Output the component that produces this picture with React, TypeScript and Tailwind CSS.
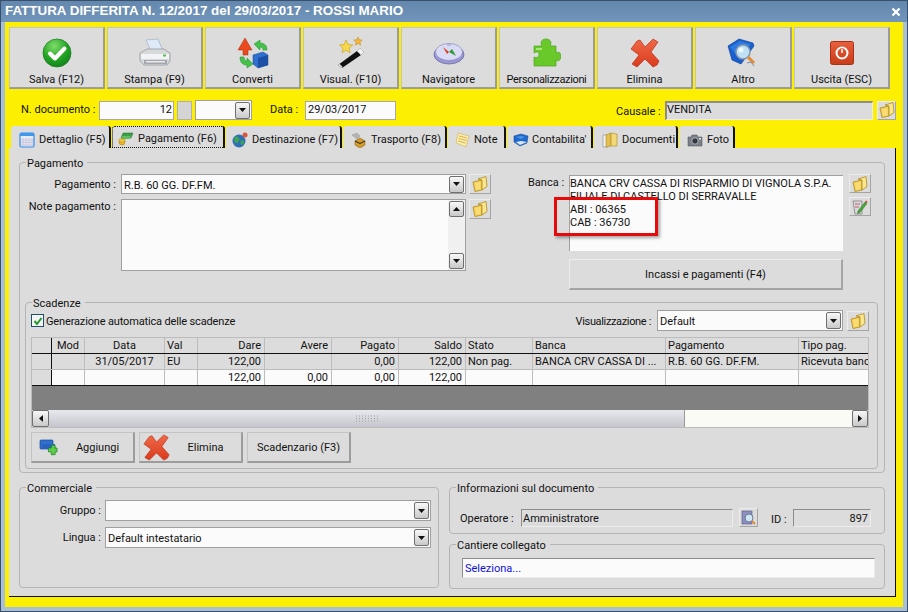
import React from "react";

const Check = () => (
  <svg width="30" height="30" viewBox="0 0 30 30">
    <defs>
      <radialGradient id="cg" cx="40%" cy="25%" r="85%"><stop offset="0" stopColor="#7fdc6a" /><stop offset="0.55" stopColor="#21a524" /><stop offset="1" stopColor="#0d7a1a" /></radialGradient>
    </defs>
    <circle cx="15" cy="15" r="14" fill="url(#cg)" stroke="#1a7a20" strokeWidth="0.7" />
    <path d="M8 15.5l5 5 9.5-10" fill="none" stroke="#fff" strokeWidth="4" strokeLinecap="round" strokeLinejoin="round" />
  </svg>
);
const Printer = () => (
  <svg width="32" height="32" viewBox="0 0 32 32">
    <path d="M7 3l12-1 5 12H12z" fill="#dfeaf8" stroke="#9fb0c4" strokeWidth="0.7" />
    <path d="M1 16l7-4h17l6 4v8l-3 4H5l-4-4z" fill="#d6d8da" stroke="#8b9095" strokeWidth="0.7" />
    <path d="M2 17h28v5H2z" fill="#f2f3f4" />
    <path d="M5 23h23v4H5z" fill="#a4a8ad" />
    <path d="M7 24h19v1.500H7z" fill="#e8e9ea" />
    <rect x="24" y="17.500" width="3" height="2" fill="#4fc04f" />
  </svg>
);
const Convert = () => (
  <svg width="32" height="32" viewBox="0 0 32 32">
    <path d="M16 18l10-3 5 3v10l-10 3-5-4z" fill="#2f6fd0" stroke="#17468f" strokeWidth="0.5" />
    <path d="M21 21l10-3v10l-10 3z" fill="#1c4fa6" />
    <path d="M8 1l7 12h-4v5H6v-5H1z" fill="#ea4a1e" stroke="#a93112" strokeWidth="0.5" />
    <path d="M17 7l6-4v3c4 0 7 2 7 7h-4c0-2-1-3-3-3v3z" fill="#45c24a" stroke="#1f8a2a" strokeWidth="0.5" />
    <path d="M16 27l-6 4v-3c-4 0-7-2-7-8h4c0 2 1 4 3 4v-3z" fill="#45c24a" stroke="#1f8a2a" strokeWidth="0.5" />
  </svg>
);
const Wand = () => (
  <svg width="32" height="32" viewBox="0 0 32 32">
    <path d="M3 28L22 14l4 4L7 31z" fill="#111" />
    <path d="M22 14l4 4 3-3-4-4z" fill="#f1f1f1" stroke="#999" strokeWidth="0.5" />
    <path d="M3 28l1.500-1.200 3 3L7 31z" fill="#ddd" />
    <path d="M11 3l2 4.500 4.800.5-3.600 3.100 1 4.700-4.200-2.500L7 15.800l1-4.700L4.500 8l4.600-.5z" fill="#f6d84a" stroke="#c89a15" strokeWidth="0.6" />
    <path d="M23 0l1.200 2.800 3 .3-2.300 2 .7 3-2.600-1.600L20.400 8l.7-3-2.300-2 3-.3z" fill="#f6b73c" stroke="#b8860b" strokeWidth="0.5" />
  </svg>
);
const Compass = () => (
  <svg width="32" height="24" viewBox="0 0 32 24">
    <ellipse cx="16" cy="13.500" rx="15" ry="9.500" fill="#9a98d4" stroke="#5f5e9a" strokeWidth="0.7" />
    <ellipse cx="16" cy="11" rx="13.500" ry="8.500" fill="#d9dcf4" stroke="#8a88c0" strokeWidth="0.7" />
    <path d="M16 11l7 4-4-7z" fill="#2f9a3a" />
    <path d="M16 11l-6-5 4 7z" fill="#d8412a" />
    <path d="M14 3h4v2h-4z" fill="#b8b7dc" />
  </svg>
);
const Puzzle = () => (
  <svg width="28" height="29" viewBox="0 0 28 29">
    <path d="M1 8h8c-2-3-1-7 4-7s6 4 4 7h6v7c3-2 5 0 5 3.500S25 24 23 22v6H1V19c3 1.500 5 0 5-2.500S4 13 1 15z" fill="#69c92a" stroke="#3f9a14" strokeWidth="0.6" />
    <path d="M3 10h6v2H3z" fill="#a8e67a" />
  </svg>
);
const XMark = ({ s = 30 }: { s?: number }) => (
  <svg width={s} height={s} viewBox="0 0 30 30">
    <defs>
      <linearGradient id="xg" x1="0" y1="0" x2="0" y2="1"><stop offset="0" stopColor="#f06a48" /><stop offset="1" stopColor="#d93a1c" /></linearGradient>
    </defs>
    <path d="M7 3l3-1 5 7 8-8 5 3-7 10 8 9-2 4-4 2-8-8-8 8-5-3 7-9-8-6z" fill="url(#xg)" stroke="#b9301a" strokeWidth="0.7" strokeLinejoin="round" />
  </svg>
);
const BookSearch = () => (
  <svg width="32" height="30" viewBox="0 0 32 30">
    <path d="M1 8L12 1l14 4 1 3-13 18L5 22z" fill="#1a5fd0" stroke="#0d3a8c" strokeWidth="0.6" />
    <path d="M3 9l10-6 11 3-11 15z" fill="#2d7be0" />
    <circle cx="16" cy="14" r="7" fill="#bfe0f5" stroke="#8798aa" strokeWidth="1.500" />
    <circle cx="14" cy="12" r="2.500" fill="#eef8ff" />
    <path d="M21 19l6 6" stroke="#e58a32" strokeWidth="3" />
    <path d="M20 25l4-1 3 4" stroke="#7a8da3" strokeWidth="1" fill="none" />
  </svg>
);
const Power = () => (
  <svg width="24" height="24" viewBox="0 0 24 24">
    <defs>
      <linearGradient id="pg" x1="0" y1="0" x2="0" y2="1"><stop offset="0" stopColor="#e9603c" /><stop offset="1" stopColor="#c93b18" /></linearGradient>
    </defs>
    <rect x="0.500" y="0.500" width="23" height="23" rx="2" fill="url(#pg)" stroke="#a83014" />
    <circle cx="12" cy="12" r="5.500" fill="none" stroke="#fff" strokeWidth="2" />
    <path d="M12 7.500v5" stroke="#d94f2a" strokeWidth="3.500" />
    <path d="M12 8v4" stroke="#fff" strokeWidth="1.500" />
  </svg>
);
const Folder = () => (
  <svg width="16" height="16" viewBox="0 0 16 16">
    <path d="M1 6l9-2v10l-7 1.500z" fill="#f5cf55" stroke="#b08a1c" strokeWidth="0.8" />
    <path d="M6 3l8-2.500 1 10-5 3.500V4z" fill="#fbe690" stroke="#b08a1c" strokeWidth="0.8" />
    <path d="M3 7l5.500-1.200v7.500L4 14z" fill="#f9dc74" />
  </svg>
);
const EditIcon = () => (
  <svg width="16" height="16" viewBox="0 0 16 16">
    <path d="M1 2h9v13H3z" fill="#d8d8de" stroke="#777" strokeWidth="0.7" />
    <path d="M3 5h5M3 8h4" stroke="#b44" strokeWidth="0.8" />
    <path d="M6 12l7-9 2 1.500-7 9-2.500 1z" fill="#4aa83a" stroke="#2c6f22" strokeWidth="0.5" />
    <path d="M13 3l1-1.500 1.500 1L15 4z" fill="#d8412a" />
  </svg>
);
const AddIcon = () => (
  <svg width="20" height="20" viewBox="0 0 20 20">
    <rect x="1" y="2" width="13" height="9" rx="1" fill="#2f6fd0" stroke="#174a9a" strokeWidth="0.7" />
    <rect x="3" y="6" width="13" height="5" fill="#2a62c0" />
    <path d="M11 9h3V6h4v3h-0.500v0H20v4h-2v3h-4v-3h-3z" fill="#5ad04a" stroke="#1d8024" strokeWidth="0.8" transform="translate(-1 1.500) scale(.95)" />
  </svg>
);
const DocSearch = () => (
  <svg width="16" height="16" viewBox="0 0 16 16">
    <rect x="1" y="1" width="10" height="13" fill="#8c8fc0" stroke="#55577f" strokeWidth="0.6" />
    <circle cx="8" cy="8" r="4" fill="#cfe6f5" stroke="#6a7c92" />
    <path d="M11 11l3 3" stroke="#e58a32" strokeWidth="2" />
  </svg>
);
const CalIcon = () => (
  <svg width="16" height="16" viewBox="0 0 16 16">
    <rect x="1" y="1" width="14" height="14" rx="1.500" fill="#e9e9f6" stroke="#2f8be6" strokeWidth="1.200" />
    <rect x="1" y="1" width="14" height="3" fill="#3d98ee" />
    <path d="M4 6v8M7 6v8M10 6v8M13 6v8M2 8h12M2 10.500h12M2 13h12" stroke="#b9b9d4" strokeWidth="0.6" />
  </svg>
);
const MoneyIcon = () => (
  <svg width="16" height="14" viewBox="0 0 16 14">
    <path d="M5 1l10 0-2 5H3z" fill="#3aa048" stroke="#1e6e2a" strokeWidth="0.5" />
    <path d="M4 4l9 0-1.500 3H3z" fill="#62bd62" />
    <circle cx="4" cy="10" r="3" fill="#e8b828" stroke="#a67f12" strokeWidth="0.5" />
    <path d="M1 7h6v3H1z" fill="#f0c93a" stroke="#a67f12" strokeWidth="0.4" />
  </svg>
);
const GlobeIcon = () => (
  <svg width="16" height="16" viewBox="0 0 16 16">
    <circle cx="7" cy="9" r="6.500" fill="#2c6fb8" />
    <path d="M3 5c2-1 3 0 4 1s0 3-1 4-2 2-3 0-1-4 0-5zM9 9c2-1 3 0 3 1s-1 3-2 3-2-3-1-4z" fill="#3ca84a" />
    <circle cx="13" cy="3" r="2.500" fill="#d9543a" />
  </svg>
);
const TruckIcon = () => (
  <svg width="16" height="16" viewBox="0 0 16 16">
    <path d="M1 3l5-2 3 3-3 3z" fill="#b4b4b4" stroke="#888" strokeWidth="0.4" />
    <path d="M4 9l5-3 5 3v4l-5 3-5-3z" fill="#d69a28" stroke="#7a5510" strokeWidth="0.5" />
    <path d="M4 9l5 2.500 5-2.500" fill="none" stroke="#111" strokeWidth="0.9" />
  </svg>
);
const NoteIcon = () => (
  <svg width="16" height="16" viewBox="0 0 16 16">
    <path d="M3 1l11 3-3 11L1 11z" fill="#f9ecae" stroke="#c9b15e" strokeWidth="0.6" />
    <path d="M4 4l8 2M3.500 6.500l8 2M3 9l7.500 2" stroke="#d2a630" strokeWidth="0.8" />
  </svg>
);
const BookIcon = () => (
  <svg width="16" height="14" viewBox="0 0 16 14">
    <path d="M1 3l7-2 7 2-1 7-7 3-6-4z" fill="#1f6ad0" stroke="#10408a" strokeWidth="0.5" />
    <path d="M3 9l5-1 6 1-7 3z" fill="#dfe8f5" />
    <path d="M3 4l5-1 4 1-4 2z" fill="#4c94e6" />
  </svg>
);
const DocsIcon = () => (
  <svg width="16" height="16" viewBox="0 0 16 16">
    <path d="M1 3h5v12H1z" fill="#f1f1f1" stroke="#888" strokeWidth="0.6" />
    <path d="M4 3l5-2v13l-5 1z" fill="#e5bf50" stroke="#a88a25" strokeWidth="0.6" />
    <path d="M9 1l6 1v12l-6 0z" fill="#f3d876" stroke="#a88a25" strokeWidth="0.6" />
  </svg>
);
const CamIcon = () => (
  <svg width="16" height="13" viewBox="0 0 16 13">
    <path d="M1 3h3l1-2h5l1 2h4v9H1z" fill="#7a7f88" stroke="#4a4e55" strokeWidth="0.5" />
    <circle cx="8" cy="7" r="3.200" fill="#33373d" stroke="#c9ccd2" strokeWidth="0.8" />
    <rect x="12" y="4" width="2" height="1.500" fill="#e3e5e8" />
  </svg>
);

const Tri = ({ dir = "down" }: { dir?: "down" | "up" | "left" | "right" }) => {
  const d = { down: "M0 0h7L3.500 4z", up: "M0 4h7L3.500 0z", left: "M4 0v7L0 3.500z", right: "M0 0v7l4-3.500z" }[dir];
  const isH = dir === "left" || dir === "right";
  return (
    <svg width={isH ? 4 : 7} height={isH ? 7 : 4} viewBox={isH ? "0 0 4 7" : "0 0 7 4"}>
      <path d={d} fill="#111" />
    </svg>
  );
};

const ToolBtn = ({ icon, label, wide, tight }: { icon: React.ReactNode; label: string; wide?: boolean; tight?: boolean }) => (
  <button className={`${wide ? "w-[97px]" : "w-[96px]"} h-[62px] shrink-0 flex flex-col items-center bg-[#dcdcdc] border border-[#c4c4c4] border-r-[#9c9c9c] border-b-[#9c9c9c] border-r-2 border-b-2`}>
    <span className="h-[45px] flex items-center justify-center pt-[6px]">{icon}</span>
    <span className={`leading-[14px] mt-[2px] ${tight ? "tracking-[-0.35px]" : ""}`}>{label}</span>
  </button>
);

const FolderBtn = ({ children, cls }: { children?: React.ReactNode; cls: string }) => (
  <button className={`${cls} shrink-0 flex items-center justify-center bg-[#dcdcdc] border border-[#ececec] border-r-[#a4a4a4] border-b-[#a4a4a4]`}>
    {children ?? <Folder />}
  </button>
);

const Select = ({ cls, value }: { cls: string; value?: string }) => (
  <div className={`${cls} shrink-0 flex items-center justify-between bg-[#fbfbfb] border border-[#a0a0a0] pl-[2px] pr-[1px]`}>
    <span className="leading-none pt-[2px]">{value}</span>
    <span className="w-[15px] h-[17px] flex items-center justify-center rounded-[2px] border border-[#6f6f6f] bg-gradient-to-b from-[#f8f8f8] to-[#c9c9c9]">
      <Tri />
    </span>
  </div>
);

const Group = ({ title, cls, children }: { title: string; cls: string; children: React.ReactNode }) => (
  <div className={`relative ${cls} border border-[#b4b4b4] rounded-[4px]`}>
    <span className="absolute left-[6px] top-[-6px] bg-[#dcdcdc] pl-[1px] pr-[4px] leading-[13px]">{title}</span>
    {children}
  </div>
);

const Tab = ({ cls, icon, label, active }: { cls: string; icon: React.ReactNode; label: string; active?: boolean }) => (
  <div className={`${cls} h-[22px] shrink-0 flex items-center rounded-t-[3px] bg-[#dcdcdc] border-r-2 border-r-[#111] ${active ? "pt-[4px] outline-1 outline-dotted outline-[#111] -outline-offset-1" : "pt-[6px]"}`}>
    <span className="w-[16px] flex justify-center shrink-0">{icon}</span>
    <span className="whitespace-nowrap">{label}</span>
  </div>
);

const cell = "h-full flex items-center px-[3px] pt-[2px] border-r border-[#bcbcbc] shrink-0 whitespace-nowrap overflow-hidden";

const Row = ({ kind, vals }: { kind: "head" | "data" | "total"; vals: string[] }) => {
  const bg = kind === "total" ? "bg-[#fbfbfb]" : "bg-[#dcdcdc]";
  const line = kind === "data" ? "border-b border-[#bcbcbc]" : "border-b border-[#111]";
  return (
    <div className={`flex h-[16px] ${bg} ${line}`}>
      <div className={`${cell} w-[20px] bg-[#dcdcdc] !border-r-[#111]`}></div>
      <div className={`${cell} w-[33px] justify-center`}>{vals[0]}</div>
      <div className={`${cell} w-[80px] justify-center`}>{vals[1]}</div>
      <div className={`${cell} w-[33px] !px-[2px]`}>{vals[2]}</div>
      <div className={`${cell} w-[67px] justify-end`}>{vals[3]}</div>
      <div className={`${cell} w-[67px] justify-end`}>{vals[4]}</div>
      <div className={`${cell} w-[67px] justify-end`}>{vals[5]}</div>
      <div className={`${cell} w-[67px] justify-end`}>{vals[6]}</div>
      <div className={`${cell} w-[67px] !px-[2px]`}>{vals[7]}</div>
      <div className={`${cell} w-[133px] !px-[2px]`}>{vals[8]}</div>
      <div className={`${cell} w-[133px] !px-[2px]`}>{vals[9]}</div>
      <div className="h-full flex items-center px-[2px] pt-[2px] flex-1 whitespace-nowrap overflow-hidden">{vals[10]}</div>
    </div>
  );
};

const ActBtn = ({ icon, label }: { icon?: React.ReactNode; label: string }) => (
  <button className="relative w-[104px] h-[31px] flex items-center justify-center pt-[3px] bg-[#dcdcdc] border border-[#c4c4c4] border-r-[#9c9c9c] border-b-[#9c9c9c] border-r-2 border-b-2">
    {icon}
    <span className={icon ? "ml-[30px]" : ""}>{label}</span>
  </button>
);

export default function App() {
  return (
    <div className="w-[908px] h-[612px] flex flex-col border border-[#38506a] bg-[#a9bfd6] overflow-hidden text-[11px] text-[#111] font-['Roboto',sans-serif]">
      <div className="h-[21px] shrink-0 flex items-center justify-between pl-[4px] pr-[5px] bg-gradient-to-b from-[#6488ad] to-[#7296bb] text-white">
        <span className="font-bold text-[13.400px] whitespace-nowrap font-['Liberation_Sans',sans-serif]">FATTURA DIFFERITA N. 12/2017 del 29/03/2017 - ROSSI MARIO</span>
        <span className="w-[12px] h-[12px] flex items-center justify-center">
          <svg width="10" height="10" viewBox="0 0 10 10"><path d="M1.500 1.500l7 7M8.500 1.500l-7 7" stroke="#fff" strokeWidth="2.200" /></svg>
        </span>
      </div>
      <div className="flex-1 mx-[4px] mb-[4px] bg-[#fcf000] pt-[5px] pl-[4px] flex flex-col min-h-0">
        <div className="flex gap-[2px]">
          <ToolBtn icon={<Check />} label="Salva (F12)" />
          <ToolBtn icon={<Printer />} label="Stampa (F9)" />
          <ToolBtn icon={<Convert />} label="Converti" />
          <ToolBtn icon={<Wand />} label="Visual. (F10)" />
          <ToolBtn icon={<Compass />} label="Navigatore" />
          <ToolBtn tight icon={<Puzzle />} label="Personalizzazioni" />
          <ToolBtn icon={<XMark />} label="Elimina" />
          <ToolBtn wide icon={<BookSearch />} label="Altro" />
          <ToolBtn icon={<Power />} label="Uscita (ESC)" />
        </div>

        <div className="mt-[11px] h-[20px] flex items-center">
          <span className="ml-[12px] w-[75px] whitespace-nowrap">N. documento :</span>
          <div className="ml-[3px] w-[75px] h-[19px] pt-[1px] bg-[#fbfbfb] border border-[#a8a8a8] flex items-center justify-end pr-[1px]">12</div>
          <div className="ml-[3px] w-[15px] h-[19px] bg-[#d4d4d4] border border-[#b0b0b0]"></div>
          <Select cls="ml-[3px] w-[57px] h-[20px]" />
          <span className="ml-[18px] w-[35px] whitespace-nowrap">Data :</span>
          <div className="w-[91px] h-[19px] pt-[1px] bg-[#fbfbfb] border border-[#a8a8a8] flex items-center pl-[2px]">29/03/2017</div>
          <span className="ml-[220px] w-[49px] pt-[5px] whitespace-nowrap">Causale :</span>
          <div className="w-[208px] h-[19px] bg-[#dcdcdc] border border-[#ececec] border-t-[#8c8c8c] border-l-[#8c8c8c] border-t-2 border-l-2 flex items-center">VENDITA</div>
          <FolderBtn cls="ml-[4px] w-[19px] h-[19px]" />
        </div>

        <div className="mt-[6px] flex pl-[2px] gap-[1px]">
          <Tab cls="w-[100px] pl-[8px] gap-[4px]" icon={<CalIcon />} label="Dettaglio (F5)" />
          <Tab cls="w-[113px] pl-[6px] gap-[4px]" icon={<MoneyIcon />} label="Pagamento (F6)" active />
          <Tab cls="w-[116px] pl-[6px] gap-[4px]" icon={<GlobeIcon />} label="Destinazione (F7)" />
          <Tab cls="w-[104px] pl-[8px] gap-[4px]" icon={<TruckIcon />} label="Trasporto (F8)" />
          <Tab cls="w-[58px] pl-[7px] gap-[3px]" icon={<NoteIcon />} label="Note" />
          <Tab cls="w-[86px] pl-[6px] gap-[3px]" icon={<BookIcon />} label="Contabilita'" />
          <Tab cls="w-[84px] pl-[8px] gap-[4px]" icon={<DocsIcon />} label="Documenti" />
          <Tab cls="w-[56px] pl-[8px] gap-[4px]" icon={<CamIcon />} label="Foto" />
        </div>

        <div className="w-[887px] h-[449px] bg-[#dcdcdc] border-r border-b border-[#111] pt-[14px] pl-[10px] flex flex-col">
          <Group title="Pagamento" cls="w-[866px] h-[311px] pt-[11px] shrink-0">
            <div className="flex items-start">
              <div className="w-[96px] text-right pt-[4px] leading-[14px]">
                Pagamento :
                <div className="mt-[8px]">Note pagamento :</div>
              </div>
              <div className="ml-[5px] w-[345px] flex flex-col gap-[5px]">
                <Select cls="w-[345px] h-[20px]" value="R.B. 60 GG. DF.FM." />
                <div className="w-[345px] h-[72px] bg-[#fbfbfb] border border-[#a0a0a0] flex justify-end">
                  <div className="w-[17px] h-full bg-[#f0f0f0] flex flex-col justify-between p-[1px]">
                    <span className="w-[15px] h-[16px] flex items-center justify-center rounded-[2px] border border-[#6f6f6f] bg-gradient-to-b from-[#f8f8f8] to-[#c9c9c9]"><Tri dir="up" /></span>
                    <span className="w-[15px] h-[16px] flex items-center justify-center rounded-[2px] border border-[#6f6f6f] bg-gradient-to-b from-[#f8f8f8] to-[#c9c9c9]"><Tri /></span>
                  </div>
                </div>
              </div>
              <div className="ml-[3px] flex flex-col gap-[5px]">
                <FolderBtn cls="w-[22px] h-[20px]" />
                <FolderBtn cls="w-[22px] h-[20px]" />
              </div>
              <div className="ml-[37px] w-[36px] pt-[2px] leading-[14px] whitespace-nowrap">Banca :</div>
              <div className="ml-[5px] w-[274px] mt-[1px] flex flex-col">
                <div className="relative h-[76px] bg-[#fbfbfb] border-l border-t border-[#a0a0a0] leading-[13px] pt-[1px] whitespace-nowrap">
                  <div>BANCA CRV CASSA DI RISPARMIO DI VIGNOLA S.P.A.</div>
                  <div>FILIALE DI CASTELLO DI SERRAVALLE</div>
                  <div>ABI : 06365</div>
                  <div>CAB : 36730</div>
                  <div className="absolute left-[-16px] top-[21px] w-[104px] h-[39px] border-[3px] border-[#e60b0b] shadow-[2px_2px_3px_rgba(0,0,0,0.35)]"></div>
                </div>
                <button className="mt-[8px] h-[31px] pt-[2px] bg-[#dcdcdc] border border-[#ececec] border-r-[#a4a4a4] border-b-[#a4a4a4] border-r-2 border-b-2">Incassi e pagamenti (F4)</button>
              </div>
              <div className="ml-[6px] flex flex-col gap-[4px]">
                <FolderBtn cls="w-[22px] h-[19px]" />
                <FolderBtn cls="w-[22px] h-[19px]"><EditIcon /></FolderBtn>
              </div>
            </div>

            <Group title="Scadenze" cls="ml-[5px] mt-[12px] w-[853px] h-[167px] pt-[7px] pl-[5px]">
              <div className="w-[838px] h-[21px] flex items-center justify-between">
                <div className="flex items-center gap-[2px]">
                  <span className="w-[13px] h-[13px] border border-[#1e4f6e] bg-[#f4f4f4] flex items-center justify-center">
                    <svg width="10" height="10" viewBox="0 0 10 10"><path d="M1.500 5l2.500 3 4.500-6" fill="none" stroke="#1e9a2a" strokeWidth="2" /></svg>
                  </span>
                  <span className="tracking-[-0.15px] pt-[3px]">Generazione automatica delle scadenze</span>
                </div>
                <div className="flex items-center">
                  <span className="mr-[6px] tracking-[-0.35px] pt-[3px]">Visualizzazione :</span>
                  <Select cls="w-[186px] h-[21px]" value="Default" />
                  <FolderBtn cls="ml-[4px] w-[22px] h-[20px]" />
                </div>
              </div>
              <div className="mt-[6px] w-[838px] h-[91px] border border-[#bcbcbc] flex flex-col overflow-hidden">
                <Row kind="head" vals={["Mod", "Data", "Val", "Dare", "Avere", "Pagato", "Saldo", "Stato", "Banca", "Pagamento", "Tipo pag."]} />
                <Row kind="data" vals={["", "31/05/2017", "EU", "122,00", "", "0,00", "122,00", "Non pag.", "BANCA CRV CASSA DI ...", "R.B. 60 GG. DF.FM.", "Ricevuta banc"]} />
                <Row kind="total" vals={["", "", "", "122,00", "0,00", "0,00", "122,00", "", "", "", ""]} />
                <div className="h-[24px] bg-[#808080] shrink-0"></div>
                <div className="flex-1 flex">
                  <span className="w-[17px] flex items-center justify-center rounded-[2px] border border-[#6f6f6f] bg-gradient-to-b from-[#f8f8f8] to-[#c9c9c9]"><Tri dir="left" /></span>
                  <div className="w-[636px] flex items-center justify-center bg-gradient-to-b from-[#e8e9ee] to-[#c4c6cd] border-r border-[#999]">
                    <svg width="24" height="7" viewBox="0 0 24 7">
                      <path d="M1 1h22M1 3.500h22M1 6h22" stroke="#a0a0a8" strokeWidth="1" strokeDasharray="1 2" />
                    </svg>
                  </div>
                  <div className="flex-1 bg-[#fbfbf6]"></div>
                  <span className="w-[16px] flex items-center justify-center rounded-[2px] border border-[#6f6f6f] bg-gradient-to-b from-[#f8f8f8] to-[#c9c9c9]"><Tri dir="right" /></span>
                </div>
              </div>
              <div className="mt-[4px] flex gap-[4px]">
                <ActBtn icon={<span className="absolute left-[7px] top-[5px]"><AddIcon /></span>} label="Aggiungi" />
                <ActBtn icon={<span className="absolute left-[3px] top-[1px]"><XMark s={27} /></span>} label="Elimina" />
                <ActBtn label="Scadenzario (F3)" />
              </div>
            </Group>
          </Group>

          <div className="mt-[14px] flex gap-[10px]">
            <Group title="Commerciale" cls="w-[420px] h-[101px] pt-[12px] shrink-0">
              <div className="flex items-center">
                <span className="w-[81px] text-right pt-[2px]">Gruppo :</span>
                <Select cls="ml-[4px] w-[326px] h-[21px]" />
              </div>
              <div className="mt-[6px] flex items-center">
                <span className="w-[81px] text-right pt-[2px]">Lingua :</span>
                <Select cls="ml-[4px] w-[326px] h-[21px]" value="Default intestatario" />
              </div>
            </Group>
            <div className="flex flex-col gap-[10px]">
              <Group title="Informazioni sul documento" cls="w-[436px] h-[47px] pt-[19px]">
                <div className="flex items-center">
                  <span className="ml-[10px] w-[61px] whitespace-nowrap pt-[2px]">Operatore :</span>
                  <div className="w-[212px] h-[18px] pt-[2px] bg-[#dcdcdc] border border-[#ececec] border-t-[#8c8c8c] border-l-[#8c8c8c] flex items-center pl-[1px]">Amministratore</div>
                  <FolderBtn cls="ml-[6px] w-[19px] h-[19px]"><DocSearch /></FolderBtn>
                  <span className="ml-[13px] w-[22px] pt-[5px]">ID :</span>
                  <div className="w-[78px] h-[18px] pt-[2px] bg-[#dcdcdc] border border-[#ececec] border-t-[#8c8c8c] border-l-[#8c8c8c] flex items-center justify-end pr-[2px]">897</div>
                </div>
              </Group>
              <Group title="Cantiere collegato" cls="w-[436px] h-[45px] pt-[13px] pl-[12px]">
                <div className="w-[413px] h-[20px] pt-[2px] bg-[#fbfbfb] border border-[#ececec] border-t-[#8c8c8c] border-l-[#8c8c8c] flex items-center pl-[2px] text-[#1010e0]">Seleziona...</div>
              </Group>
            </div>
          </div>
        </div>
      </div>
    </div>
  );
}
